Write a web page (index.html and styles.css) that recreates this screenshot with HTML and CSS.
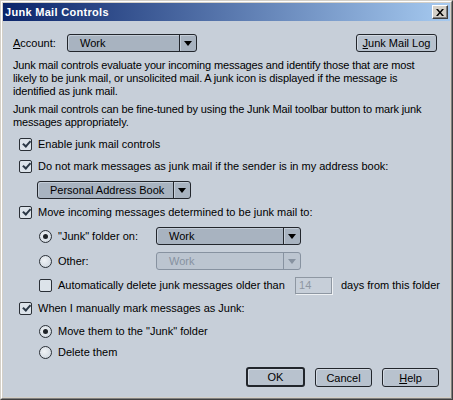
FILE: index.html
```html
<!DOCTYPE html>
<html lang="en">
<head>
    <meta charset="UTF-8">
    <title>Junk Mail Controls</title>
    <link rel="stylesheet" href="styles.css">
</head>
<body>

    <div class="window">
        <div class="frame">

            <!-- Title bar -->
            <div class="titlebar">
                <span class="title">Junk Mail Controls</span>
                <button class="close-btn">
                    <svg width="8" height="7" viewBox="0 0 8 7"><path d="M0 0h2l2 2.5L6 0h2L5 3.5 8 7H6L4 4.5 2 7H0l3-3.5z" fill="#000"/></svg>
                </button>
            </div>

            <div class="content">

                <div class="account-row">
                    <span class="lbl"><u>A</u>ccount:</span>
                    <div class="combo combo-account">
                        <span class="combo-text">Work</span>
                        <span class="combo-arrow"><i class="tri"></i></span>
                    </div>
                    <button class="btn btn-log"><u>J</u>unk Mail Log</button>
                </div>

                <p class="info first">Junk mail controls evaluate your incoming messages and identify those that are most<br>likely to be junk mail, or unsolicited mail. A junk icon is displayed if the message is<br>identified as junk mail.</p>
                <p class="info second">Junk mail controls can be fine-tuned by using the Junk Mail toolbar button to mark junk<br>messages appropriately.</p>

                <div class="row r-enable">
                    <span class="check on"></span>
                    <span>Enable junk mail controls</span>
                </div>

                <div class="row r-addr">
                    <span class="check on"></span>
                    <span>Do not mark messages as junk mail if the sender is in my address book:</span>
                </div>

                <div class="combo combo-book">
                    <span class="combo-text">Personal Address Book</span>
                    <span class="combo-arrow"><i class="tri"></i></span>
                </div>

                <div class="row r-move">
                    <span class="check on"></span>
                    <span>Move incoming messages determined to be junk mail to:</span>
                </div>

                <div class="row sub r-junk">
                    <span class="radio on"></span>
                    <span class="opt-lbl">"Junk" folder on:</span>
                    <div class="combo combo-folder">
                        <span class="combo-text">Work</span>
                        <span class="combo-arrow"><i class="tri"></i></span>
                    </div>
                </div>

                <div class="row sub r-other">
                    <span class="radio"></span>
                    <span class="opt-lbl">Other:</span>
                    <div class="combo combo-folder disabled">
                        <span class="combo-text">Work</span>
                        <span class="combo-arrow"><i class="tri"></i></span>
                    </div>
                </div>

                <div class="row sub r-days">
                    <span class="check"></span>
                    <span class="days-lbl">Automatically delete junk messages older than</span>
                    <span class="days-input">14</span>
                    <span>days from this folder</span>
                </div>

                <div class="row r-manual">
                    <span class="check on"></span>
                    <span>When I manually mark messages as Junk:</span>
                </div>

                <div class="row sub r-movethem">
                    <span class="radio on"></span>
                    <span>Move them to the "Junk" folder</span>
                </div>

                <div class="row sub r-delete">
                    <span class="radio"></span>
                    <span>Delete them</span>
                </div>

                <div class="buttons">
                    <button class="btn btn-ok">OK</button>
                    <button class="btn">Cancel</button>
                    <button class="btn"><u>H</u>elp</button>
                </div>

            </div>
        </div>
    </div>

</body>
</html>
```

FILE: styles.css
```css
body {
    margin: 0;
    background: #c7cfd9;
    font-family: 'Liberation Sans', Arial, sans-serif;
    font-size: 11px;
    color: #000;
}

/* Window frame */
.window {
    width: 453px;
    height: 400px;
    box-sizing: border-box;
    border: 1px solid;
    border-color: #d4d0c8 #404040 #404040 #d4d0c8;
}
.frame {
    height: 100%;
    box-sizing: border-box;
    border: 1px solid;
    border-color: #fff #808080 #808080 #fff;
    padding: 1px;
    background: #d4d0c8;
    display: flex;
    flex-direction: column;
}

/* Title bar */
.titlebar {
    height: 18px;
    flex-shrink: 0;
    background: linear-gradient(to right, #0a246a, #a6caf0);
    display: flex;
    align-items: center;
    justify-content: space-between;
    padding: 0 2px 0 2px;
}
.title {
    color: #fff;
    font-weight: bold;
    font-size: 11px;
    letter-spacing: 0.3px;
}
.close-btn {
    width: 16px;
    height: 14px;
    padding: 0;
    background: #d4d0c8;
    border: 1px solid;
    border-color: #fff #404040 #404040 #fff;
    box-shadow: inset -1px -1px 0 #808080;
    display: flex;
    align-items: center;
    justify-content: center;
}

/* Content */
.content {
    flex: 1;
    background: #c7cfd9;
    padding: 13px 10px 0 10px;
    display: flex;
    flex-direction: column;
}

.account-row {
    display: flex;
    align-items: center;
    height: 18px;
}
.lbl {
    width: 54px;
}

.info {
    margin: 0;
    line-height: 13px;
    white-space: nowrap;
    letter-spacing: -0.15px;
}
.info.first { margin-top: 7px; }
.info.second { margin-top: 5px; }

/* Combo boxes */
.combo {
    height: 18px;
    box-sizing: border-box;
    border: 1px solid #22262c;
    border-radius: 3px;
    background: #a8b3c0;
    display: flex;
    align-items: stretch;
    box-shadow: inset 1px 1px 0 #c4cdd8;
}
.combo-text {
    flex: 1;
    display: flex;
    align-items: center;
    padding-left: 12px;
    white-space: nowrap;
}
.combo-arrow {
    width: 16px;
    border-left: 1px solid #22262c;
    display: flex;
    align-items: center;
    justify-content: center;
    box-shadow: inset 1px 0 0 #c4cdd8;
}
.tri {
    width: 0;
    height: 0;
    border-left: 4px solid transparent;
    border-right: 4px solid transparent;
    border-top: 5px solid #000;
}
.combo-account { width: 130px; }
.combo-book {
    width: 154px;
    margin: 7px 0 0 24px;
}
.combo-folder { width: 145px; }

.combo.disabled {
    border-color: #8792a0;
    background: #bcc5d0;
    color: #8792a0;
    box-shadow: none;
}
.combo.disabled .combo-arrow { border-left-color: #8792a0; box-shadow: none; }
.combo.disabled .tri { border-top-color: #8792a0; }

/* Buttons */
.btn {
    height: 18px;
    box-sizing: border-box;
    padding: 0;
    border: 1px solid #22262c;
    border-radius: 3px;
    background: #b8c2ce;
    font-family: 'Liberation Sans', Arial, sans-serif;
    font-size: 11px;
    color: #000;
    box-shadow: inset 1px 1px 0 #d2d9e2;
}
.btn-log {
    margin-left: auto;
    width: 81px;
    margin-right: 3px;
}

/* Check / radio rows */
.row {
    display: flex;
    align-items: center;
    height: 16px;
    white-space: nowrap;
}
.row.sub { padding-left: 20px; }

.check, .radio {
    width: 13px;
    height: 13px;
    box-sizing: border-box;
    border: 1px solid #2a2f36;
    background: #dce3ea;
    margin: 0 6px 0 6px;
    flex-shrink: 0;
    position: relative;
}
.check { border-radius: 2px; }
.check.on::after {
    content: "";
    position: absolute;
    left: 2px;
    top: 1px;
    width: 6px;
    height: 3px;
    border-left: 2px solid #2b3846;
    border-bottom: 2px solid #2b3846;
    transform: rotate(-48deg) translate(0, 1px);
}
.radio {
    border-radius: 50%;
    background: radial-gradient(circle at 40% 40%, #f0f3f6, #c9d2dc);
}
.radio.on::after {
    content: "";
    position: absolute;
    left: 3px;
    top: 3px;
    width: 5px;
    height: 5px;
    border-radius: 50%;
    background: #1f2328;
}

.r-enable { margin-top: 7px; }
.r-addr { margin-top: 6px; }
.r-move { margin-top: 5px; }
.r-junk { margin-top: 7px; height: 18px; }
.r-other { margin-top: 7px; height: 18px; }
.r-days { margin-top: 6px; height: 18px; }
.r-manual { margin-top: 6px; }
.r-movethem { margin-top: 7px; }
.r-delete { margin-top: 5px; }

.opt-lbl { width: 98px; }
.days-lbl { width: 238px; }
.days-input {
    width: 37px;
    height: 17px;
    box-sizing: border-box;
    border: 1px solid #8e97a2;
    box-shadow: 1px 1px 0 #eef1f4;
    color: #8e97a2;
    padding-left: 3px;
    line-height: 15px;
    margin-right: 9px;
}

.buttons {
    display: flex;
    justify-content: flex-end;
    gap: 10px;
    margin-top: 8px;
    padding-right: 1px;
}
.buttons .btn {
    width: 57px;
    height: 19px;
}
.buttons .btn-ok {
    width: 59px;
    height: 20px;
    border-width: 2px;
    margin-top: -1px;
}
```
